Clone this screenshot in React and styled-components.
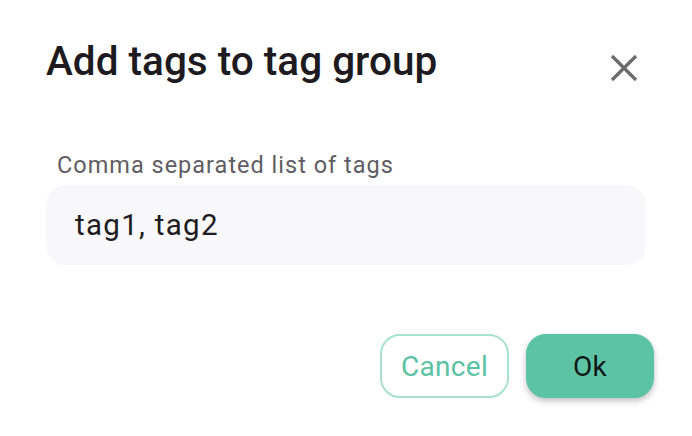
import React from 'react'
import styled, { createGlobalStyle } from 'styled-components'

const Global = createGlobalStyle`
  html, body {
    margin: 0;
    background: #ffffff;
    font-family: Roboto, "Noto Sans", sans-serif;
  }
`

const Dialog = styled.div`
  width: 692px;
  height: 436px;
  box-sizing: border-box;
  padding: 34px 38px 38px 46px;
  display: flex;
  flex-direction: column;
  background: #fff;
`

const Header = styled.div`
  display: flex;
  align-items: flex-start;
  justify-content: space-between;
`

const Title = styled.h2`
  margin: 0;
  font-size: 40.5px;
  font-weight: 500;
  color: #1d1b20;
  line-height: 54px;
  padding-left: 0;
`

const CloseButton = styled.button`
  border: none;
  background: none;
  padding: 0;
  margin: 18px 14px 0 0;
  width: 32px;
  height: 32px;
  display: flex;
  align-items: center;
  justify-content: center;
  color: #6b6b6b;
`

const Field = styled.div`
  margin-top: 63px;
  margin-right: 8px;
  display: flex;
  flex-direction: column;
`

const Label = styled.label`
  font-size: 23.5px;
  letter-spacing: 1px;
  color: #5f5d63;
  padding-left: 11px;
  line-height: 28px;
`

const Input = styled.div`
  margin-top: 6px;
  height: 80px;
  border-radius: 20px;
  background: #f8f7fa;
  display: flex;
  align-items: center;
  padding-left: 29px;
  font-size: 29.5px;
  letter-spacing: 1.3px;
  color: #1d1b20;
`

const Actions = styled.div`
  margin-top: auto;
  display: flex;
  justify-content: flex-end;
  gap: 17px;
`

const Button = styled.button`
  width: ${p => (p.$primary ? '128px' : '129px')};
  height: 64px;
  border-radius: 20px;
  font-family: Roboto, sans-serif;
  font-size: 28px;
  letter-spacing: 0.3px;
  box-sizing: border-box;
  border: 2px solid ${p => (p.$primary ? '#5cc3a4' : '#a9e1cf')};
  background: ${p => (p.$primary ? '#5cc3a4' : '#ffffff')};
  color: ${p => (p.$primary ? '#101816' : '#5bc2a3')};
  box-shadow: ${p => (p.$primary ? '0 3px 6px rgba(0,0,0,0.25)' : 'none')};
`

export default function App() {
  return (
    <>
      <Global />
      <Dialog>
        <Header>
          <Title>Add tags to tag group</Title>
          <CloseButton aria-label="close">
            <svg width="30" height="30" viewBox="0 0 30 30">
              <path d="M3 3 L27 27 M27 3 L3 27" stroke="currentColor" strokeWidth="3.2" />
            </svg>
          </CloseButton>
        </Header>
        <Field>
          <Label>Comma separated list of tags</Label>
          <Input>tag1, tag2</Input>
        </Field>
        <Actions>
          <Button>Cancel</Button>
          <Button $primary>Ok</Button>
        </Actions>
      </Dialog>
    </>
  )
}
